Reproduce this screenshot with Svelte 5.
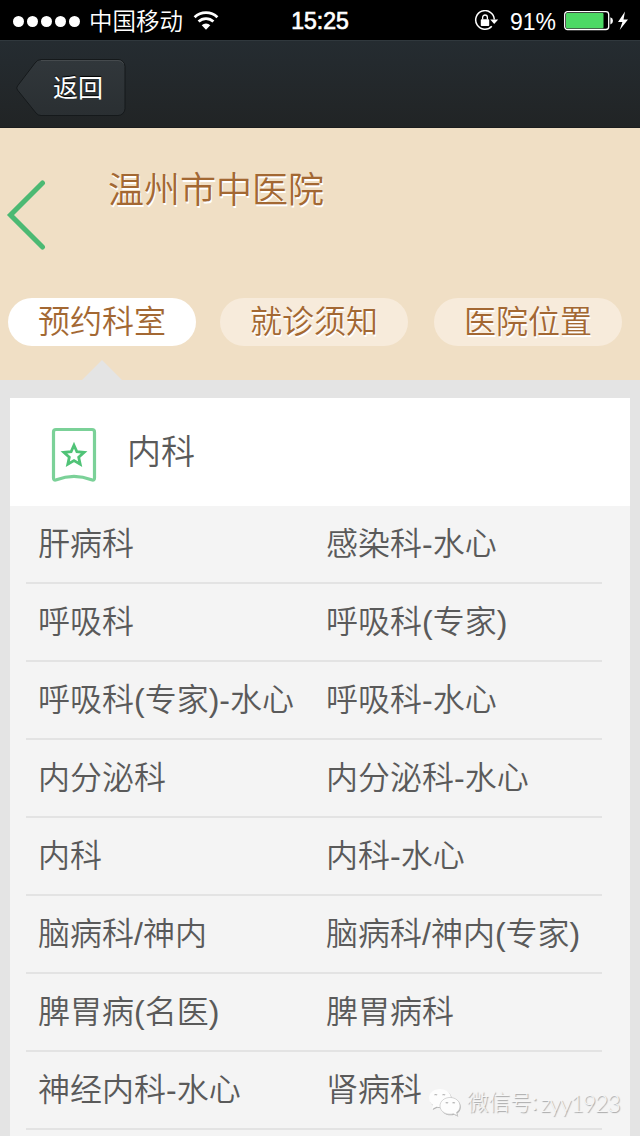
<script>
  let active = 0;

  const tabs = ["预约科室", "就诊须知", "医院位置"];

  const rows = [
    ["肝病科", "感染科-水心"],
    ["呼吸科", "呼吸科(专家)"],
    ["呼吸科(专家)-水心", "呼吸科-水心"],
    ["内分泌科", "内分泌科-水心"],
    ["内科", "内科-水心"],
    ["脑病科/神内", "脑病科/神内(专家)"],
    ["脾胃病(名医)", "脾胃病科"],
    ["神经内科-水心", "肾病科"]
  ];
</script>

<div class="screen">
  <div class="status">
    <div class="carrier">
      <div class="dots">
        {#each Array(5) as _}
          <i></i>
        {/each}
      </div>
      <span class="operator">中国移动</span>
      <svg class="wifi" width="26" height="20" viewBox="0 0 26 20">
        <path d="M1.6 6.3a16.4 16.4 0 0 1 22.8 0" fill="none" stroke="#fff" stroke-width="2.8" />
        <path d="M5.6 10.6a10.7 10.7 0 0 1 14.8 0" fill="none" stroke="#fff" stroke-width="2.8" />
        <path d="M8.7 14.2a6 6 0 0 1 8.6 0L13 18.8z" fill="#fff" />
      </svg>
    </div>
    <span class="time">15:25</span>
    <div class="power">
      <svg width="25" height="22" viewBox="0 0 25 22">
        <path d="M17.800 16.300A9.300 9.300 0 1 1 20.300 9.500" fill="none" stroke="#fff" stroke-width="1.500" />
        <path d="M16.200 9.500h8l-4 4.400z" fill="#fff" />
        <rect x="6.800" y="9.200" width="8.400" height="6.800" rx=".8" fill="#fff" />
        <path d="M8.600 9.500V7.400a2.400 2.400 0 0 1 4.800 0v2.100" fill="none" stroke="#fff" stroke-width="1.300" />
      </svg>
      <span class="percent">91%</span>
      <svg width="66" height="20" viewBox="0 0 66 20">
        <rect x=".7" y=".7" width="44" height="17.800" rx="2.800" fill="none" stroke="#fff" stroke-width="1.300" />
        <rect x="2" y="2" width="37.500" height="15.200" rx="1" fill="#4cd964" />
        <path d="M46.400 6.200q2.600.8 2.600 3.600t-2.600 3.600z" fill="#fff" />
        <path d="M61 .5 54 11h4.400l-2.700 8L64 8.400h-4.500z" fill="#fff" />
      </svg>
    </div>
  </div>

  <div class="nav">
    <button class="back">
      <svg width="112" height="60" viewBox="0 0 112 60">
        <defs>
          <linearGradient id="btn" x1="0" y1="0" x2="0" y2="1">
            <stop offset="0" stop-color="#31373b" />
            <stop offset="1" stop-color="#2a2f32" />
          </linearGradient>
        </defs>
        <path d="M26 .5h77a7 7 0 0 1 7 7v42a7 7 0 0 1-7 7H26q-3 0-5-2.500L2.500 31q-1.600-2 0-4L20 4q2.500-3.500 6-3.500z" fill="url(#btn)" stroke="#15191b" />
        <path d="M26 1.500h77q4 0 5.500 3" fill="none" stroke="#454a4d" />
      </svg>
      <span>返回</span>
    </button>
  </div>

  <header>
    <div class="hospital">
      <svg width="40" height="72" viewBox="0 0 40 72">
        <path d="M36.500 4 4.500 36l32 32" fill="none" stroke="#4cb973" stroke-width="5" stroke-linecap="round" />
      </svg>
      <h1>温州市中医院</h1>
    </div>
    <div class="tabs">
      {#each tabs as tab, i}
        <button class="tab" class:active={active === i} on:click={() => (active = i)}>{tab}</button>
      {/each}
    </div>
  </header>

  <main>
    <div class="section">
      <svg width="46" height="56" viewBox="0 0 46 56">
        <path d="M5 2.500h36q2.500 0 2.500 2.500v46q0 3-3 1.800-17.500-7-35 0-3 1.200-3-1.800V5Q2.500 2.500 5 2.500z" fill="none" stroke="#7bd198" stroke-width="3.200" />
        <path d="M23 18.200l2.900 6.500 7.200.7-5.400 4.800 1.500 7-6.200-3.600-6.200 3.600 1.500-7-5.400-4.800 7.200-.7z" fill="none" stroke="#50c377" stroke-width="2.800" />
      </svg>
      <h2>内科</h2>
    </div>
    <div class="list">
      {#each rows as [left, right]}
        <div class="row">
          <span>{left}</span>
          <span>{right}</span>
        </div>
      {/each}
    </div>
  </main>

  <div class="watermark">
    <svg width="34" height="30" viewBox="0 0 34 30">
      <g fill="#b4b4b4" transform="translate(.8 1)">
        <path d="M12 1C5.500 1 1 5 1 10c0 3 1.500 5.400 4 7l-1 4 4.500-2.200q1.800.4 3.500.4c6 0 11-4 11-9.200S18 1 12 1z" />
        <path d="M22 9.500c-5.600 0-10 3.700-10 8.400s4.400 8.300 10 8.300q1.700 0 3.300-.5l4.200 2.100-1-3.500c2.300-1.500 3.500-3.700 3.500-6.400 0-4.700-4.400-8.400-10-8.400z" />
      </g>
      <path d="M12 1C5.500 1 1 5 1 10c0 3 1.500 5.400 4 7l-1 4 4.500-2.200q1.800.4 3.500.4c6 0 11-4 11-9.200S18 1 12 1z" fill="#fdfdfd" />
      <path d="M22 9.500c-5.600 0-10 3.700-10 8.400s4.400 8.300 10 8.300q1.700 0 3.300-.5l4.200 2.100-1-3.500c2.300-1.500 3.500-3.700 3.500-6.400 0-4.700-4.400-8.400-10-8.400z" fill="#fdfdfd" stroke="#c4c4c4" stroke-width=".7" />
      <g fill="none" stroke="#b4b4b4" stroke-width="1.200">
        <path d="M6.500 7.200q1.300-1.400 2.600 0M14.500 7.200q1.300-1.400 2.600 0" />
        <path d="M17.700 15.200q1.200-1.300 2.400 0M24.500 15.200q1.200-1.300 2.400 0" />
      </g>
    </svg>
    <span class="label">微信号:</span>
    <span class="account">zyy1923</span>
  </div>
</div>

<style>
  :global(body) {
    background: #e4e4e4;
  }

  .screen {
    position: relative;
    width: 640px;
    height: 1136px;
    overflow: hidden;
    background: #e4e4e4;
    font-family: "Liberation Sans", "Noto Sans CJK SC", sans-serif;
    font-weight: 350;
  }

  svg {
    display: block;
    flex: none;
  }

  button {
    border: 0;
    padding: 0;
    font: inherit;
    cursor: pointer;
  }

  h1, h2 {
    margin: 0;
    font-weight: 350;
  }

  /* status bar */
  .status {
    display: grid;
    grid-template-columns: 1fr 80px 1fr;
    align-items: center;
    height: 40px;
    background: #000;
    color: #fff;
    font-size: 24px;
    line-height: 40px;
  }

  .carrier {
    display: flex;
    align-items: center;
    padding-left: 13px;
  }

  .dots {
    display: flex;
    gap: 3px;
  }

  .dots i {
    width: 11px;
    height: 11px;
    border-radius: 50%;
    background: #fff;
  }

  .operator {
    margin: 2px 10px 0 9px;
    font-size: 23.5px;
  }

  .time {
    font-size: 23px;
    text-align: center;
    -webkit-text-stroke: .7px #fff;
  }

  .power {
    display: flex;
    align-items: center;
    justify-content: flex-end;
    padding-right: 10px;
  }

  .percent {
    margin: 1px 8px 0 11px;
    font-size: 23px;
  }

  /* top bar */
  .nav {
    box-sizing: border-box;
    height: 88px;
    padding: 18px 0 0 15px;
    border-top: 1px solid #30383d;
    border-bottom: 1px solid #1b1d1e;
    background: linear-gradient(#252c31, #212425);
  }

  .back {
    display: grid;
    align-items: center;
    background: none;
    color: #fff;
    font-size: 25px;
    font-weight: 400;
    text-shadow: 0 -1px 1px #000;
  }

  .back svg, .back span {
    grid-area: 1 / 1;
  }

  .back span {
    padding: 0 0 7px 14px;
  }

  /* hospital header */
  header {
    box-sizing: border-box;
    height: 252px;
    padding-top: 38px;
    background: #f0dfc5;
    color: #a36833;
  }

  .hospital {
    display: flex;
    align-items: flex-start;
    height: 132px;
    padding-left: 6px;
  }

  .hospital svg {
    margin-top: 13px;
  }

  h1 {
    margin-left: 62px;
    font-size: 36px;
    line-height: 50px;
    text-shadow: 1px 2px 0 #fff;
  }

  .tabs {
    display: flex;
    gap: 24px;
    padding: 0 0 0 8px;
  }

  .tab {
    position: relative;
    width: 188px;
    height: 48px;
    border-radius: 24px;
    background: #f7ebdb;
    color: #a36833;
    font-size: 32px;
    line-height: 46px;
    text-shadow: 1px 2px 0 #fff;
  }

  .tab:last-child {
    margin-left: 2px;
  }

  .tab.active {
    background: #fff;
  }

  .tab.active::after {
    content: "";
    position: absolute;
    top: 62px;
    left: 74px;
    border: 20px solid transparent;
    border-top: 0;
    border-bottom-color: #e4e4e4;
  }

  /* departments */
  main {
    margin: 18px 10px 0;
    background: #f4f4f4;
    color: #5a5a5a;
  }

  .section {
    display: flex;
    align-items: center;
    height: 108px;
    padding-left: 41px;
    background: #fff;
  }

  .section svg {
    margin-top: 6px;
  }

  h2 {
    margin-left: 30px;
    font-size: 34px;
    line-height: 110px;
  }

  .list {
    height: 630px;
    padding: 0 28px 0 16px;
  }

  .row {
    box-sizing: border-box;
    display: grid;
    grid-template-columns: 288px 288px;
    height: 78px;
    padding-left: 12px;
    border-bottom: 2px solid #e3e3e3;
    font-size: 32px;
    line-height: 76px;
    white-space: nowrap;
  }

  .watermark {
    position: absolute;
    left: 428px;
    top: 1087px;
    display: flex;
    align-items: center;
    height: 32px;
    color: #f6f6f6;
    font-size: 21.500px;
    font-weight: 300;
    line-height: 32px;
    text-shadow: 1px 1px 1px #a4a4a4;
    white-space: nowrap;
  }

  .label {
    margin-left: 5px;
  }

  .account {
    margin-left: 3px;
    font-family: Lato, sans-serif;
    font-size: 23px;
    letter-spacing: -1.100px;
  }
</style>
